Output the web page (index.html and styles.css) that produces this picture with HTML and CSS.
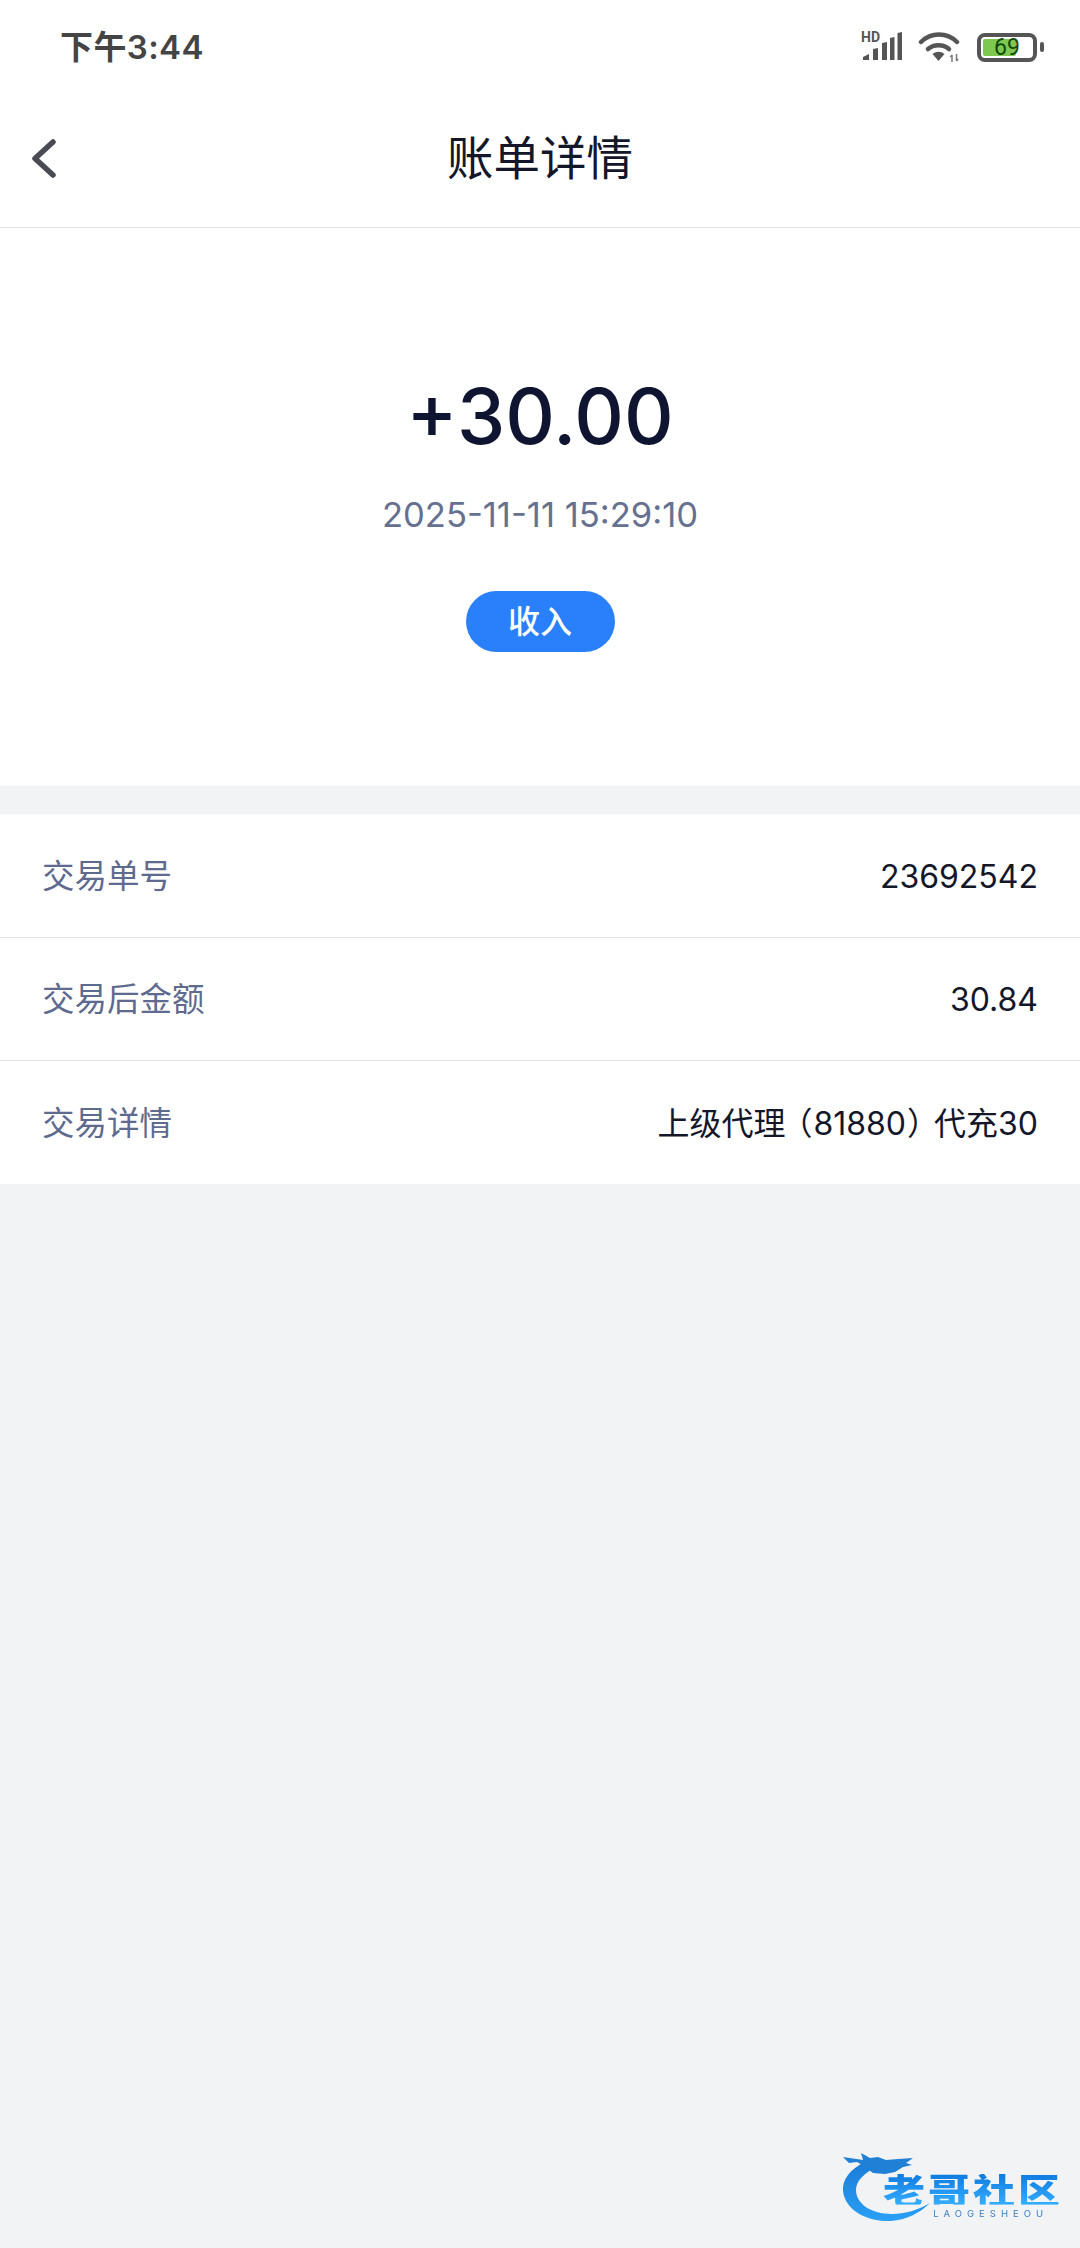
FILE: index.html
```html
<!DOCTYPE html>
<html lang="zh-CN">
<head>
<meta charset="utf-8">
<title>账单详情</title>
<link rel="stylesheet" href="styles.css">
</head>
<body>
<div class="page">
  <div class="status">
    <span class="clock">下午3:44</span>
    <div class="status-icons">
      <div class="signal">
        <span class="hd">HD</span>
        <svg width="42" height="30" viewBox="0 0 42 30">
          <path d="M2 28v-3l6-3v6zM12 28V17l5-1v12zM21 28V11l5-1v18zM29 28V6l4.500-1v23zM36.500 28V1l4.500-1v28z" fill="#555"/>
        </svg>
      </div>
      <svg class="ic-wifi" width="42" height="30" viewBox="0 0 42 30">
        <g fill="none" stroke="#555" stroke-width="4.500" stroke-linecap="round">
          <path d="M3 10C13 0 29 0 39 10"/>
          <path d="M10 17c6-5 15-5 21 0"/>
        </g>
        <path d="M14.500 22c4-3 8-3 12 0l-6 7z" fill="#555"/>
        <path d="M34 30v-7M32.500 25l1.500-2M38.500 22v7M38.500 29l1.500-2" stroke="#777" stroke-width="1.500" fill="none"/>
      </svg>
      <div class="battery">
        <div class="cell"><div class="level" style="width:69%"></div><span class="pct">69</span></div>
        <div class="cap"></div>
      </div>
    </div>
  </div>
  <header class="nav">
    <svg class="back" width="26" height="42" viewBox="0 0 26 42">
      <path d="M21 4L3 20.500 21 37" fill="none" stroke="#4a4a55" stroke-width="5.500" stroke-linecap="round" stroke-linejoin="round"/>
    </svg>
    <h1 class="title">账单详情</h1>
  </header>
  <section class="hero">
    <div class="amount">+30.00</div>
    <div class="date">2025-11-11 15:29:10</div>
    <div class="tag">收入</div>
  </section>
  <section class="rows">
    <div class="row"><span class="label">交易单号</span><span class="value">23692542</span></div>
    <div class="row"><span class="label">交易后金额</span><span class="value">30.84</span></div>
    <div class="row"><span class="label">交易详情</span><span class="value">上级代理<span class="paren-open">（</span>81880<span class="paren-close">）</span>代充30</span></div>
  </section>
  <div class="mark">
    <svg class="dragon" width="110" height="75" viewBox="0 0 110 75">
      <defs><linearGradient id="dg" x1="0" y1="0" x2="0" y2="1"><stop offset="0" stop-color="#1a7dd8"/><stop offset="1" stop-color="#2a9ff6"/></linearGradient></defs>
      <path d="M25 12C10 19 2 30 3 41c2 18 22 31 48 30 15-1 29-8 39-18-12 7-25 11-38 11-22 0-36-11-36-24 0-9 8-17 21-23z" fill="url(#dg)"/>
      <path d="M3 7l20 3-2-7 9 5 8-1 8 3 12-1 15-1-7 5 6 2-9 2-8 5-10 2-12-1-9-7-7-4-8 1z" fill="#1f80d6"/>
    </svg>
    <div class="mark-text">
      <span class="mark-cn">老哥社区</span>
      <span class="mark-en">LAOGESHEOU</span>
    </div>
  </div>
</div>
</body>
</html>
```

FILE: styles.css
```css
* { box-sizing: border-box; margin: 0; padding: 0; }
html, body { background: #f2f3f5; }
body { font-family: Inter, "Noto Sans CJK SC", sans-serif; }
.page { position: relative; width: 1080px; height: 2248px; overflow: hidden; background: #f2f3f5; }

.status { height: 90px; background: #fff; display: flex; justify-content: space-between; align-items: center; padding: 4px 36px 0 60px; }
.clock { font-size: 33px; line-height: 40px; padding-bottom: 1px; font-weight: 600; color: #444; letter-spacing: 0.4px; }
.status-icons { display: flex; align-items: center; gap: 15px; }
.signal { position: relative; width: 42px; height: 30px; }
.signal svg { display: block; }
.hd { position: absolute; left: 0; top: -1px; font-family: Roboto, sans-serif; font-size: 14px; line-height: 12px; font-weight: 700; color: #555; }
.battery { display: flex; align-items: center; gap: 3px; margin-left: 2px; }
.cell { position: relative; width: 60px; height: 29px; border: 4px solid #555; border-radius: 8px; padding: 2px; }
.level { height: 100%; background: #7ec850; border-radius: 2px; }
.pct { position: absolute; inset: 0; display: flex; align-items: center; justify-content: center; font-size: 23px; line-height: 1; color: #0f4a0c; font-family: Roboto, sans-serif; }
.cap { width: 4px; height: 10px; background: #555; border-radius: 2px; }

.nav { position: relative; height: 138px; background: #fff; border-bottom: 1px solid #e0e1e4; display: flex; align-items: center; justify-content: center; }
.back { position: absolute; left: 32px; top: 48px; }
.title { font-size: 46.500px; font-weight: 400; color: #14172a; line-height: 1; }

.hero { height: 558px; background: #fff; display: flex; flex-direction: column; align-items: center; padding-top: 140px; }
.amount { font-size: 77px; line-height: 97px; font-weight: 500; color: #0f1430; }
.date { font-size: 34.600px; line-height: 40px; margin-top: 29px; color: #667090; }
.tag { width: 149px; height: 61px; margin-top: 57px; border-radius: 31px; background: #2a7ffb; color: #fff; font-size: 32px; line-height: 40px; font-weight: 500; display: flex; align-items: center; justify-content: center; }

.rows { margin-top: 28px; background: #fff; }
.row { height: 123px; display: flex; justify-content: space-between; align-items: center; padding: 2px 42px 0; border-bottom: 1px solid #e0e1e4; }
.row:first-child { height: 124px; }
.row:last-child { border-bottom: 0; }
.label { font-size: 32.500px; line-height: 40px; color: #5f6a8f; }
.value { font-size: 32px; line-height: 40px; color: #14172a; }
.paren-open { font-feature-settings: "halt"; margin: 0 1px 0 11px; }
.paren-close { font-feature-settings: "halt"; margin: 0 11px 0 1px; }

.mark { position: absolute; left: 840px; top: 2150px; width: 230px; height: 76px; filter: blur(0.6px); }
.dragon { position: absolute; left: 0; top: 0; }
.mark-text { position: absolute; left: 43px; top: 24px; width: 180px; display: flex; flex-direction: column; align-items: flex-end; }
.mark-cn { width: 180px; height: 36px; font-size: 42px; line-height: 40px; font-weight: 900; letter-spacing: 3px; white-space: nowrap; transform: scaleY(0.85); transform-origin: top; background: linear-gradient(#0f7be0, #34adff); -webkit-background-clip: text; background-clip: text; color: transparent; }
.mark-en { font-family: Inter, sans-serif; font-size: 9.500px; line-height: 10px; letter-spacing: 5px; color: #3b7fc0; margin-top: -1px; margin-right: 15px; white-space: nowrap; }
```
